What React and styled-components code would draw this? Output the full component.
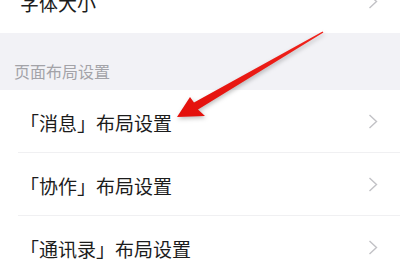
import React from 'react'
import styled, { createGlobalStyle } from 'styled-components'

const Global = createGlobalStyle`
    html, body {
        margin: 0;
        padding: 0;
        background: #ffffff;
        overflow: hidden;
    }
    body {
        font-family: "Noto Sans CJK SC", "Noto Sans", sans-serif;
    }
`

const Page = styled.div`
    position: relative;
    width: 400px;
    height: 272px;
    overflow: hidden;
`

const List = styled.div`
    margin-top: -30px;
    display: flex;
    flex-direction: column;
`

const Row = styled.div`
    height: 63px;
    display: flex;
    align-items: center;
    justify-content: space-between;
    padding: 0 22px 0 20px;
    box-sizing: border-box;
    position: relative;
    background: #ffffff;
    &::after {
        content: '';
        display: ${p => (p.$divider ? 'block' : 'none')};
        position: absolute;
        left: 18px;
        right: 0;
        bottom: 0;
        height: 1px;
        background: #f0f0f2;
    }
`

const Label = styled.span`
    font-size: 19px;
    line-height: 1;
    color: #1c1c1c;
    margin-top: 2px;
`

const Section = styled.div`
    height: 57px;
    background: #f2f2f6;
    display: flex;
    align-items: flex-end;
    padding: 0 0 11px 14px;
    box-sizing: border-box;
    font-size: 16px;
    line-height: 1;
    color: #a3a3a8;
`

const Overlay = styled.svg`
    position: absolute;
    left: 0;
    top: 0;
    pointer-events: none;
    filter: drop-shadow(1px 2px 2px rgba(0, 0, 0, 0.25));
`

function Chevron() {
    return (
        <svg width="10" height="15" viewBox="0 0 10 15">
            <path d="M1.5 1 L8.5 7.5 L1.5 14" fill="none" stroke="#c2c2c6" strokeWidth="1.4" />
        </svg>
    )
}

const rows = ['「消息」布局设置', '「协作」布局设置', '「通讯录」布局设置']

export default function App() {
    return (
        <Page>
            <Global />
            <List>
                <Row>
                    <Label>字体大小</Label>
                    <Chevron />
                </Row>
                <Section>页面布局设置</Section>
                {rows.map((r, i) => (
                    <Row key={r} $divider={i < rows.length - 1}>
                        <Label>{r}</Label>
                        <Chevron />
                    </Row>
                ))}
            </List>
            <Overlay width="400" height="272" viewBox="0 0 400 272">
                <defs>
                    <linearGradient id="red" x1="0" y1="1" x2="1" y2="0">
                        <stop offset="0" stopColor="#e3100c" />
                        <stop offset="1" stopColor="#f0231c" />
                    </linearGradient>
                </defs>
                <polygon
                    points="177,117 190,97 194,102.6 322.6,31.4 323.4,32.6 198,109.4 205,116"
                    fill="url(#red)"
                />
            </Overlay>
        </Page>
    )
}
